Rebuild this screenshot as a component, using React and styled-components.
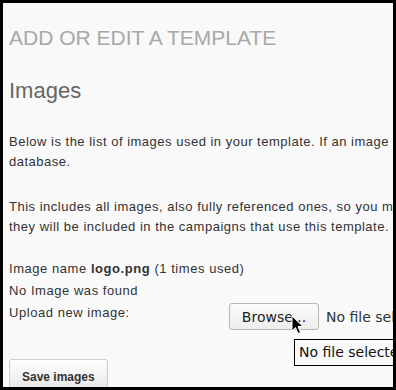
import React from 'react';
import styled, { createGlobalStyle } from 'styled-components';

const GlobalStyle = createGlobalStyle`
  html, body {
    margin: 0;
    padding: 0;
    background: #000;
  }
`;

const Frame = styled.div`
  box-sizing: border-box;
  width: 396px;
  height: 390px;
  border: 3px solid #000;
  background: #f9f9f9;
  overflow: hidden;
  font-family: "Liberation Sans", Arial, sans-serif;
  color: #333;
`;

const Content = styled.div`
  width: 640px;
  padding: 23px 0 0 6px;
`;

const PageTitle = styled.h1`
  margin: 0 0 28px;
  font-size: 21px;
  line-height: 24px;
  font-weight: normal;
  color: #a8a8a8;
  text-transform: uppercase;
`;

const SectionTitle = styled.h2`
  margin: 0 0 28px;
  font-size: 22px;
  line-height: 26px;
  font-weight: normal;
  color: #666;
`;

const Text = styled.p`
  margin: 0 0 ${(p) => p.gap || 25}px;
  font-size: 13px;
  line-height: 20px;
  letter-spacing: 0.5px;
  white-space: nowrap;
`;

const Form = styled.div`
  display: flex;
  flex-direction: column;
  font-size: 13px;
  line-height: 22px;
  letter-spacing: 0.55px;
`;

const Row = styled.div`
  display: grid;
  grid-template-columns: 220px auto;
  align-items: start;
`;

const FileField = styled.div`
  position: relative;
  display: flex;
  align-items: center;
  gap: 7px;
  margin-top: 1px;
  font-family: "DejaVu Sans", sans-serif;
  font-size: 14px;
  letter-spacing: 0;
  white-space: nowrap;
`;

const BrowseButton = styled.button`
  box-sizing: border-box;
  width: 90px;
  height: 27px;
  padding: 0;
  border: 1px solid #b6b6b6;
  border-radius: 3px;
  background: linear-gradient(#fbfbfb, #ededed);
  font-family: "DejaVu Sans", sans-serif;
  font-size: 14px;
  color: #222;
`;

const FileStatus = styled.span`
  color: #2e3436;
`;

const Tooltip = styled.div`
  position: absolute;
  left: 65px;
  top: 36px;
  box-sizing: border-box;
  height: 27px;
  padding: 0 6px 0 4px;
  border: 1px solid #000;
  background: #f9f9f9;
  color: #111;
  line-height: 25px;
  white-space: nowrap;
`;

const Cursor = styled.svg`
  position: absolute;
  left: 62px;
  top: 12px;
`;

const SaveButton = styled.button`
  margin-top: 29px;
  align-self: flex-start;
  padding: 8px 12px;
  border: 1px solid #ccc;
  border-radius: 3px;
  background: linear-gradient(#ffffff, #e4e4e4);
  font-family: "Liberation Sans", Arial, sans-serif;
  font-size: 12px;
  line-height: 18px;
  font-weight: bold;
  letter-spacing: 0;
  color: #333;
`;

export default function App() {
  return (
    <>
      <GlobalStyle />
      <Frame>
        <Content>
          <PageTitle>Add or edit a template</PageTitle>
          <SectionTitle>Images</SectionTitle>
          <Text>
            Below is the list of images used in your template. If an image is not found it will be uploaded to the
            <br />
            database.
          </Text>
          <Text gap={21}>
            This includes all images, also fully referenced ones, so you may choose to upload them as well, and
            <br />
            they will be included in the campaigns that use this template.
          </Text>
          <Form>
            <div>
              Image name <b>logo.png</b> (1 times used)
            </div>
            <div>No Image was found</div>
            <Row>
              <span>Upload new image:</span>
              <FileField>
                <BrowseButton>Browse...</BrowseButton>
                <FileStatus>No file selected.</FileStatus>
                <Cursor width="13" height="20" viewBox="0 0 13 20">
                  <path
                    d="M1 1 L1 16 L4.5 12.5 L7 18.5 L9.5 17.5 L7 11.5 L12 11.5 Z"
                    fill="#000"
                    stroke="#fff"
                    strokeWidth="1"
                    strokeLinejoin="round"
                  />
                </Cursor>
                <Tooltip>No file selected.</Tooltip>
              </FileField>
            </Row>
            <SaveButton>Save images</SaveButton>
          </Form>
        </Content>
      </Frame>
    </>
  );
}
